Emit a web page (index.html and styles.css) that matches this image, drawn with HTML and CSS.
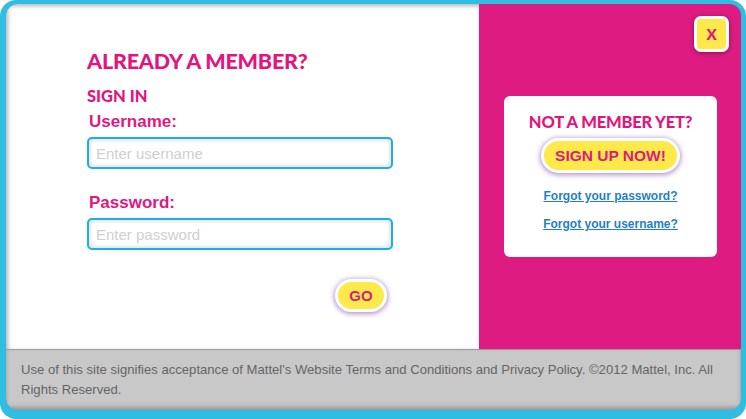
FILE: index.html
```html
<!DOCTYPE html>
<html>
<head>
<meta charset="utf-8">
<link rel="stylesheet" href="styles.css">
</head>
<body>
<div class="frame">
  <div class="inner">
    <div class="main">
      <div class="signin">
        <h1 class="title">ALREADY A MEMBER?</h1>
        <h2 class="subtitle">SIGN IN</h2>
        <form class="form">
          <label class="label" for="u">Username:</label>
          <input class="field" id="u" type="text" placeholder="Enter username">
          <label class="label label-pw" for="p">Password:</label>
          <input class="field" id="p" type="password" placeholder="Enter password">
          <button class="pill go" type="button">GO</button>
        </form>
      </div>
      <div class="side">
        <button class="close" type="button">X</button>
        <div class="card">
          <div class="card-title">NOT A MEMBER YET?</div>
          <button class="pill signup" type="button">SIGN UP NOW!</button>
          <a class="link" href="#">Forgot your password?</a>
          <a class="link" href="#">Forgot your username?</a>
        </div>
      </div>
    </div>
    <div class="footer">Use of this site signifies acceptance of Mattel's Website Terms and Conditions and Privacy Policy. ©2012 Mattel, Inc. All Rights Reserved.</div>
  </div>
</div>
</body>
</html>
```
FILE: styles.css
```css
html, body {
  margin: 0;
  padding: 0;
  background: #ffffff;
}
.frame {
  width: 746px;
  height: 419px;
  box-sizing: border-box;
  background: #2fbee1;
  border-radius: 16px;
  padding: 4px 5px 9px 6px;
}
.inner {
  height: 100%;
  border-radius: 12px;
  overflow: hidden;
  display: flex;
  flex-direction: column;
  position: relative;
  box-shadow: inset 2px 2px 4px rgba(0,0,0,0.35);
}
.main {
  height: 345px;
  display: flex;
}
.signin {
  width: 473px;
  background: #ffffff;
  box-sizing: border-box;
  padding: 42px 0 0 81px;
  box-shadow: inset 2px 2px 4px rgba(0,0,0,0.3);
}
.title {
  margin: 0;
  font-family: Lato, "Open Sans", sans-serif;
  font-weight: 900;
  font-size: 21.5px;
  line-height: 30px;
  color: #e3157c;
  letter-spacing: -0.2px;
}
.subtitle {
  margin: 9px 0 0;
  font-family: Lato, "Open Sans", sans-serif;
  font-weight: 900;
  font-size: 16.5px;
  line-height: 22px;
  color: #e3157c;
}
.form {
  display: flex;
  flex-direction: column;
  width: 306px;
  margin-top: 5px;
}
.label {
  font-family: "Liberation Sans", Arial, sans-serif;
  font-weight: bold;
  font-size: 17px;
  line-height: 20px;
  color: #e0197f;
  padding-left: 2px;
}
.label-pw {
  margin-top: 24px;
}
.field {
  margin-top: 5px;
  width: 306px;
  height: 32px;
  box-sizing: border-box;
  border: 2px solid #1aaeea;
  border-radius: 5px;
  padding: 0 7px;
  font-family: "Liberation Sans", Arial, sans-serif;
  font-size: 15px;
  color: #444;
  background: #fff;
  box-shadow: inset 0 0 5px rgba(0,0,0,0.22);
  outline: none;
}
.field::placeholder {
  color: #cfcfcf;
}
.pill {
  font-family: "Liberation Sans", Arial, sans-serif;
  font-weight: bold;
  color: #e0197f;
  background: #fde94a;
  border: 3px solid #ffffff;
  border-radius: 20px;
  box-shadow: 0 1px 5px 1px rgba(120, 60, 160, 0.55);
  cursor: pointer;
  padding: 0;
}
.go {
  align-self: flex-end;
  margin: 29px 6px 0 0;
  width: 52px;
  height: 33px;
  font-size: 15px;
}
.side {
  flex: 1;
  background: #dd1b80;
  display: flex;
  flex-direction: column;
  padding: 12px 12px 0 25px;
}
.close {
  align-self: flex-end;
  width: 35px;
  height: 36px;
  box-sizing: border-box;
  border: 3px solid #ffffff;
  border-radius: 7px;
  background: #fde94a;
  color: #e3157c;
  font-family: Lato, "Open Sans", sans-serif;
  font-weight: 900;
  font-size: 15px;
  padding: 0;
  box-shadow: 0 1px 4px rgba(60, 0, 40, 0.5);
  cursor: pointer;
}
.card {
  margin-top: 44px;
  width: 213px;
  height: 161px;
  box-sizing: border-box;
  background: #ffffff;
  border-radius: 6px;
  display: flex;
  flex-direction: column;
  align-items: center;
  padding-top: 15px;
}
.card-title {
  font-family: Lato, "Open Sans", sans-serif;
  font-weight: 900;
  font-size: 16.5px;
  line-height: 22px;
  color: #e3157c;
  letter-spacing: -0.2px;
}
.signup {
  margin-top: 5px;
  width: 139px;
  height: 35px;
  font-size: 15.5px;
}
.link {
  font-family: "Liberation Sans", Arial, sans-serif;
  font-weight: bold;
  font-size: 12px;
  line-height: 14px;
  color: #1f7fc6;
  text-decoration: underline;
}
.signup + .link {
  margin-top: 16px;
}
.link + .link {
  margin-top: 14px;
}
.footer {
  flex: 1;
  background: #c8c8c8;
  border-top: 1px solid #9a9a9a;
  box-shadow: inset 0 -3px 4px rgba(0,0,0,0.25);
  box-sizing: border-box;
  padding: 10px 22px 0 15px;
  font-family: "Liberation Sans", Arial, sans-serif;
  font-size: 13.1px;
  line-height: 20px;
  color: #656565;
}
```
